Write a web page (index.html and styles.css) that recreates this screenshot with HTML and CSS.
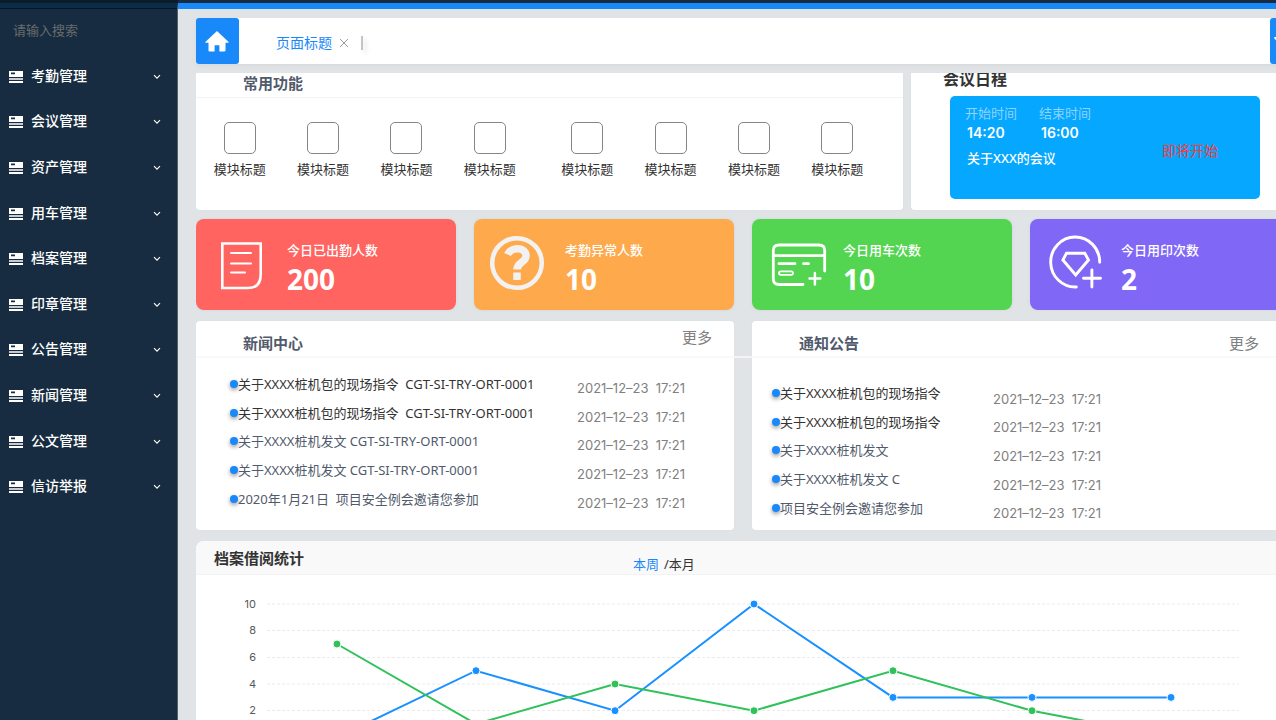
FILE: index.html
```html
<!DOCTYPE html>
<html lang="zh-CN">
<head>
<meta charset="utf-8">
<title>办公管理首页</title>
<link rel="stylesheet" href="styles.css">
</head>
<body>
<svg class="defs" aria-hidden="true">
  <symbol id="menu" viewBox="0 0 14 12"><path fill="#fff" fill-rule="evenodd" d="M0 0h14v6H0zM2 1.6v1.6h4V1.6z"/><path fill="#fff" d="M0 7.3h14v1.5H0zM0 10h14v2H0z"/></symbol>
  <symbol id="down" viewBox="0 0 8 6"><path d="M1 1.2l3 3 3-3" fill="none" stroke="#fff" stroke-width="1.1"/></symbol>
</svg>
<div class="topbar"></div>
<div class="app">
  <aside class="sidebar">
    <input class="search" type="text" placeholder="请输入搜索" aria-label="搜索">
    <nav class="menu">
      <button class="menu-item"><svg class="menu-icon"><use href="#menu"/></svg><span>考勤管理</span><svg class="arrow"><use href="#down"/></svg></button>
      <button class="menu-item"><svg class="menu-icon"><use href="#menu"/></svg><span>会议管理</span><svg class="arrow"><use href="#down"/></svg></button>
      <button class="menu-item"><svg class="menu-icon"><use href="#menu"/></svg><span>资产管理</span><svg class="arrow"><use href="#down"/></svg></button>
      <button class="menu-item"><svg class="menu-icon"><use href="#menu"/></svg><span>用车管理</span><svg class="arrow"><use href="#down"/></svg></button>
      <button class="menu-item"><svg class="menu-icon"><use href="#menu"/></svg><span>档案管理</span><svg class="arrow"><use href="#down"/></svg></button>
      <button class="menu-item"><svg class="menu-icon"><use href="#menu"/></svg><span>印章管理</span><svg class="arrow"><use href="#down"/></svg></button>
      <button class="menu-item"><svg class="menu-icon"><use href="#menu"/></svg><span>公告管理</span><svg class="arrow"><use href="#down"/></svg></button>
      <button class="menu-item"><svg class="menu-icon"><use href="#menu"/></svg><span>新闻管理</span><svg class="arrow"><use href="#down"/></svg></button>
      <button class="menu-item"><svg class="menu-icon"><use href="#menu"/></svg><span>公文管理</span><svg class="arrow"><use href="#down"/></svg></button>
      <button class="menu-item"><svg class="menu-icon"><use href="#menu"/></svg><span>信访举报</span><svg class="arrow"><use href="#down"/></svg></button>
    </nav>
  </aside>
  <main class="main">
    <div class="tabs">
      <button class="home" aria-label="首页"><svg width="24" height="21" viewBox="0 0 24 21"><path fill="#fff" d="M12 0L.6 10.8c-.5.6-.2 1 .5 1H3.500v7.400c0 .8.400 1.200 1.200 1.200h4.900v-6.200h4.800v6.200h4.900c.8 0 1.200-.4 1.200-1.200v-7.400h2.400c.7 0 1-.4.5-1z"/></svg></button>
      <a class="tab" href="#">页面标题</a>
      <button class="close" aria-label="关闭"><svg width="10" height="10" viewBox="0 0 10 10"><path d="M1 1l8 8M9 1L1 9" stroke="#999" fill="none"/></svg></button>
      <span class="tab-sep"></span>
      <button class="more-tabs" aria-label="更多标签"><svg width="12" height="8" viewBox="0 0 12 8"><path fill="#fff" d="M0 1q0-1 1-1h10q1 0 1 1L6 8z"/></svg></button>
    </div>
    <div class="content">
      <div class="row row-top">
        <section class="panel quick">
          <h2 class="quick-title">常用功能</h2>
          <div class="modules">
            <div class="module-group">
              <button class="module"><i class="tile"></i>模块标题</button>
              <button class="module"><i class="tile"></i>模块标题</button>
              <button class="module"><i class="tile"></i>模块标题</button>
              <button class="module"><i class="tile"></i>模块标题</button>
            </div>
            <div class="module-group">
              <button class="module"><i class="tile"></i>模块标题</button>
              <button class="module"><i class="tile"></i>模块标题</button>
              <button class="module"><i class="tile"></i>模块标题</button>
              <button class="module"><i class="tile"></i>模块标题</button>
            </div>
          </div>
        </section>
        <section class="panel schedule">
          <h2 class="schedule-title">会议日程</h2>
          <div class="meeting">
            <div class="meeting-info">
              <dl class="times">
                <div><dt>开始时间</dt><dd>14:20</dd></div>
                <div><dt>结束时间</dt><dd>16:00</dd></div>
              </dl>
              <p class="meeting-name">关于XXX的会议</p>
            </div>
            <span class="status">即将开始</span>
          </div>
        </section>
      </div>

      <div class="row stats">
        <section class="stat red">
          <svg class="stat-icon" viewBox="0 0 91 91"><g fill="none" stroke="#fff" stroke-width="2.600"><path d="M26.300 24.500H64.700V55.500Q64.700 69 52 69H26.300z"/><path stroke-width="2" stroke-linecap="round" d="M35 34h20M35 44.500h20M35 53.500h14"/></g></svg>
          <div class="stat-text"><p class="stat-label">今日已出勤人数</p><p class="stat-value">200</p></div>
        </section>
        <section class="stat orange">
          <svg class="stat-icon" viewBox="0 0 91 91"><g fill="none" stroke="#f2f2f2"><circle cx="43" cy="44" r="24.800" stroke-width="4.500"/><path stroke-width="7.500" d="M33.500 35.500C37 27.500 52 27.500 52 37C52 43.500 43 43 43 50.500"/><path stroke-width="7.500" d="M43 53.500v7.500"/></g></svg>
          <div class="stat-text"><p class="stat-label">考勤异常人数</p><p class="stat-value">10</p></div>
        </section>
        <section class="stat green">
          <svg class="stat-icon" viewBox="0 0 91 91"><g fill="none" stroke="#fff" stroke-width="2.800" stroke-linecap="round"><path d="M51 65.500H27Q21.300 65.500 21.300 59.500V31.500Q21.300 26 27 26H67Q72.700 26 72.700 31.500V52M21.300 36.700H72.700M27 44.700H43M51.500 44.700H56.500"/><rect x="27" y="52.300" width="14" height="3.600" rx="1.800" stroke-width="1.800"/><path d="M57.500 59.500h10.800M62.900 54v11.500" stroke-width="2.500"/></g></svg>
          <div class="stat-text"><p class="stat-label">今日用车次数</p><p class="stat-value">10</p></div>
        </section>
        <section class="stat purple">
          <svg class="stat-icon" viewBox="0 0 91 91"><g fill="none" stroke="#fff" stroke-width="2.900" stroke-linecap="round"><path d="M69.700 43.300A24.500 25 0 1 0 46.300 68"/><path d="M36.500 34.200H54.800L58.500 41L45.700 56L32.900 41z"/><path d="M53.500 59.200h17M61.900 51v17"/></g></svg>
          <div class="stat-text"><p class="stat-label">今日用印次数</p><p class="stat-value">2</p></div>
        </section>
      </div>

      <div class="row lists">
        <section class="panel">
          <header class="list-head"><h2>新闻中心</h2><a class="more more-high" href="#">更多</a></header>
          <ul class="news">
            <li class="strong"><a href="#">关于XXXX桩机包的现场指令  CGT-SI-TRY-ORT-0001</a><time>2021–12–23  17:21</time></li>
            <li class="strong"><a href="#">关于XXXX桩机包的现场指令  CGT-SI-TRY-ORT-0001</a><time>2021–12–23  17:21</time></li>
            <li><a href="#">关于XXXX桩机发文 CGT-SI-TRY-ORT-0001</a><time>2021–12–23  17:21</time></li>
            <li><a href="#">关于XXXX桩机发文 CGT-SI-TRY-ORT-0001</a><time>2021–12–23  17:21</time></li>
            <li><a href="#">2020年1月21日  项目安全例会邀请您参加</a><time>2021–12–23  17:21</time></li>
          </ul>
        </section>
        <section class="panel">
          <header class="list-head"><h2>通知公告</h2><a class="more" href="#">更多</a></header>
          <ul class="news notices">
            <li class="strong"><a href="#">关于XXXX桩机包的现场指令</a><time>2021–12–23  17:21</time></li>
            <li class="strong"><a href="#">关于XXXX桩机包的现场指令</a><time>2021–12–23  17:21</time></li>
            <li><a href="#">关于XXXX桩机发文</a><time>2021–12–23  17:21</time></li>
            <li><a href="#">关于XXXX桩机发文 C</a><time>2021–12–23  17:21</time></li>
            <li><a href="#">项目安全例会邀请您参加</a><time>2021–12–23  17:21</time></li>
          </ul>
        </section>
      </div>

      <section class="chart-panel">
        <header class="chart-head"><h2>档案借阅统计</h2><div class="range"><button class="active">本周</button> <button>/本月</button></div></header>
        <svg class="chart" viewBox="0 0 1094 180" role="img" aria-label="档案借阅统计">
          <g class="grid"><path d="M71 29H1043M71 55.500H1043M71 82.500H1043M71 109H1043M71 135.500H1043M71 162.500H1043"/></g>
          <g class="axis"><text x="60" y="33">10</text><text x="60" y="59">8</text><text x="60" y="86">6</text><text x="60" y="113">4</text><text x="60" y="139">2</text></g>
          <g class="blue-line"><polyline points="141,162.500 280,95.700 419,135.700 558,29 697,122.400 836,122.400 975,122.400"/><circle cx="141" cy="162.500" r="4"/><circle cx="280" cy="95.700" r="4"/><circle cx="419" cy="135.700" r="4"/><circle cx="558" cy="29" r="4"/><circle cx="697" cy="122.400" r="4"/><circle cx="836" cy="122.400" r="4"/><circle cx="975" cy="122.400" r="4"/></g>
          <g class="green-line"><polyline points="141,69 280,149 419,109 558,135.700 697,95.700 836,135.700 975,162.500"/><circle cx="141" cy="69" r="4"/><circle cx="280" cy="149" r="4"/><circle cx="419" cy="109" r="4"/><circle cx="558" cy="135.700" r="4"/><circle cx="697" cy="95.700" r="4"/><circle cx="836" cy="135.700" r="4"/><circle cx="975" cy="162.500" r="4"/></g>
        </svg>
      </section>
    </div>
  </main>
</div>
</body>
</html>
```
FILE: styles.css
```css
* { box-sizing: border-box; margin: 0; padding: 0; }
body {
  height: 100vh;
  display: flex;
  flex-direction: column;
  overflow: hidden;
  background: #e0e4e7;
  color: #333;
  font: 13px/20px "Noto Sans", "Noto Sans CJK SC", sans-serif;
}
button { font: inherit; color: inherit; background: none; border: 0; }
a { color: inherit; text-decoration: none; }
ul { list-style: none; }
h2 { font-size: 15px; line-height: 20px; font-weight: 700; color: #515a6b; }
.defs { position: absolute; width: 0; height: 0; }

.topbar { flex: none; height: 3px; background: linear-gradient(90deg, #0d1a27 178px, #172c40 178px); }
.app { flex: 1; min-height: 0; display: flex; }

.sidebar { flex: none; width: 178px; background: #172c40; border-top: 5px solid #0b2b4b; border-right: 1px solid #53616e; box-shadow: inset 0 1px #07131f; }
.search { display: block; width: 100%; height: 43px; margin-bottom: 3px; padding: 0 13px; border: 0; background: none; color: #fff; font: inherit; outline: 0; }
.search::placeholder { color: #686b6c; opacity: 1; }
.menu { display: grid; grid-auto-rows: 1fr; height: 456px; }
.menu-item { display: flex; align-items: center; padding: 0 16px 0 9px; color: #fff; font-size: 14px; font-weight: 500; text-align: left; }
.menu-item span { flex: 1; padding-bottom: 2px; }
.menu-icon { width: 14px; height: 12px; margin-right: 8px; }
.arrow { width: 8px; height: 6px; }

.main { flex: 1; min-width: 0; display: flex; flex-direction: column; padding: 9px 0 0 18px; border-top: 6px solid #1989fa; overflow: hidden; }
.tabs { flex: none; display: flex; align-items: center; height: 46px; margin-bottom: 9px; margin-right: -36px; background: #fff; border-radius: 3px; box-shadow: 0 2px 4px #d8d9da; }
.home { display: grid; place-items: center; width: 43px; height: 46px; margin-right: 37px; padding-right: 2px; background: #1989fa; border-radius: 3px; }
.tab { color: #1989fa; font-size: 14px; margin-top: 3px; }
.close { display: flex; margin: 4px 12px 0 7px; }
.tab-sep { width: 2px; height: 14px; margin-top: 4px; background: #c4c4c4; box-shadow: 3px 3px 5px #ddd; }
.more-tabs { display: grid; place-items: center; width: 42px; height: 46px; margin-left: auto; padding-right: 23px; background: #1989fa; border-radius: 3px; }

.content { flex: 1; min-height: 0; margin-right: -14px; overflow: hidden; }
.row { display: grid; }
.panel { min-width: 0; background: #fff; border-radius: 4px; box-shadow: 0 0 2px #dadddf; }
.row-top { grid-template-columns: 707fr 379fr; gap: 8px; height: 137px; margin-bottom: 9px; }
.row-top .panel { border-radius: 0 0 4px 4px; }
.quick-title { height: 25px; padding-left: 47px; border-bottom: 1px solid #f2f3f4; }
.modules { display: flex; gap: 14px; padding: 24px 24px 0 2px; }
.module-group { flex: 1; display: grid; grid-template-columns: repeat(4, 1fr); }
.module { display: flex; flex-direction: column; align-items: center; gap: 5px; }
.tile { width: 32px; height: 32px; border: 1px solid #858585; border-radius: 5px; }
.schedule { padding: 0 30px 0 32px; }
.schedule-title { margin-top: -4px; font-size: 16px; color: #333; }
.meeting { display: flex; align-items: center; justify-content: space-between; height: 103px; margin: 7px 0 0 7px; padding: 0 42px 0 15px; background: #05a7ff; border-radius: 5px; color: #fff; }
.meeting-info { height: 90px; }
.times { display: flex; gap: 22px; }
.times dt { color: #8fd3ff; }
.times dd { padding-left: 2px; font: 600 14px/20px Inter, sans-serif; }
.meeting-name { margin-top: 5px; padding-left: 2px; font-weight: 500; }
.status { margin-top: 6px; color: #f63c3c; font-size: 14px; }

.stats { grid-template-columns: repeat(4, 1fr); gap: 18px; margin-bottom: 11px; }
.stat { display: flex; align-items: center; height: 91px; border-radius: 8px; color: #fff; box-shadow: 0 0 3px #cfd3d6; }
.stat-icon { flex: none; width: 91px; height: 91px; }
.stat-text { padding-top: 5px; }
.stat-label { font-weight: 500; }
.stat-value { margin-top: 3px; font-size: 28px; line-height: 32px; font-weight: 700; }
.red { background: #ff6461; }
.orange { background: #ffa94d; }
.green { background: #53d551; }
.purple { background: #8067f6; }

.lists { position: relative; grid-template-columns: 1fr 1fr; gap: 18px; margin-bottom: 11px; }
.lists::after { content: ""; position: absolute; top: 35px; left: 0; right: 0; height: 2px; background: #f7f7f7; opacity: .8; }
.lists .panel { height: 209px; }
.list-head { display: flex; justify-content: space-between; align-items: flex-start; height: 37px; padding: 12px 31px 0 47px; }
.more { color: #808080; font-size: 15px; }
.list-head .more-high { margin: -6px -9px 0 0; }
.news { display: grid; grid-auto-rows: 1fr; height: 143px; margin-top: 12px; padding: 0 49px 0 34px; }
.news li { display: flex; align-items: center; justify-content: space-between; color: #515a6b; white-space: pre; }
.news li.strong { color: #333; }
.news a { display: flex; align-items: center; }
.news a::before { content: ""; width: 8px; height: 8px; background: #1989fa; border-radius: 50%; box-shadow: 0 2px 4px #999; }
.news time { color: #808080; font: 13px/16px Inter, sans-serif; padding-top: 8px; }
.notices { margin-top: 21px; padding: 0 189px 0 20px; }
.notices time { padding-top: 11px; }

.chart-panel { background: #fff; border-radius: 8px 8px 0 0; overflow: hidden; box-shadow: 0 0 2px #dadddf; }
.chart-head { display: flex; height: 34px; padding: 7px 18px 0; background: #f9f9f9; border-bottom: 1px solid #f3f3f3; }
.chart-head h2 { width: 31%; color: #333; }
.range { display: flex; gap: 5px; padding: 5px 0 0 91px; }
.range .active { color: #1989fa; }
.chart { display: block; width: 100%; }
.grid path { fill: none; stroke: #ebebeb; stroke-dasharray: 3 2; }
.axis text { fill: #595959; font: 11px Inter, sans-serif; text-anchor: end; }
.chart polyline { fill: none; stroke-width: 2; }
.chart circle { stroke: #fff; stroke-width: 1; }
.blue-line { fill: #1890ff; stroke: #1890ff; }
.green-line { fill: #2fc25b; stroke: #2fc25b; }
```
